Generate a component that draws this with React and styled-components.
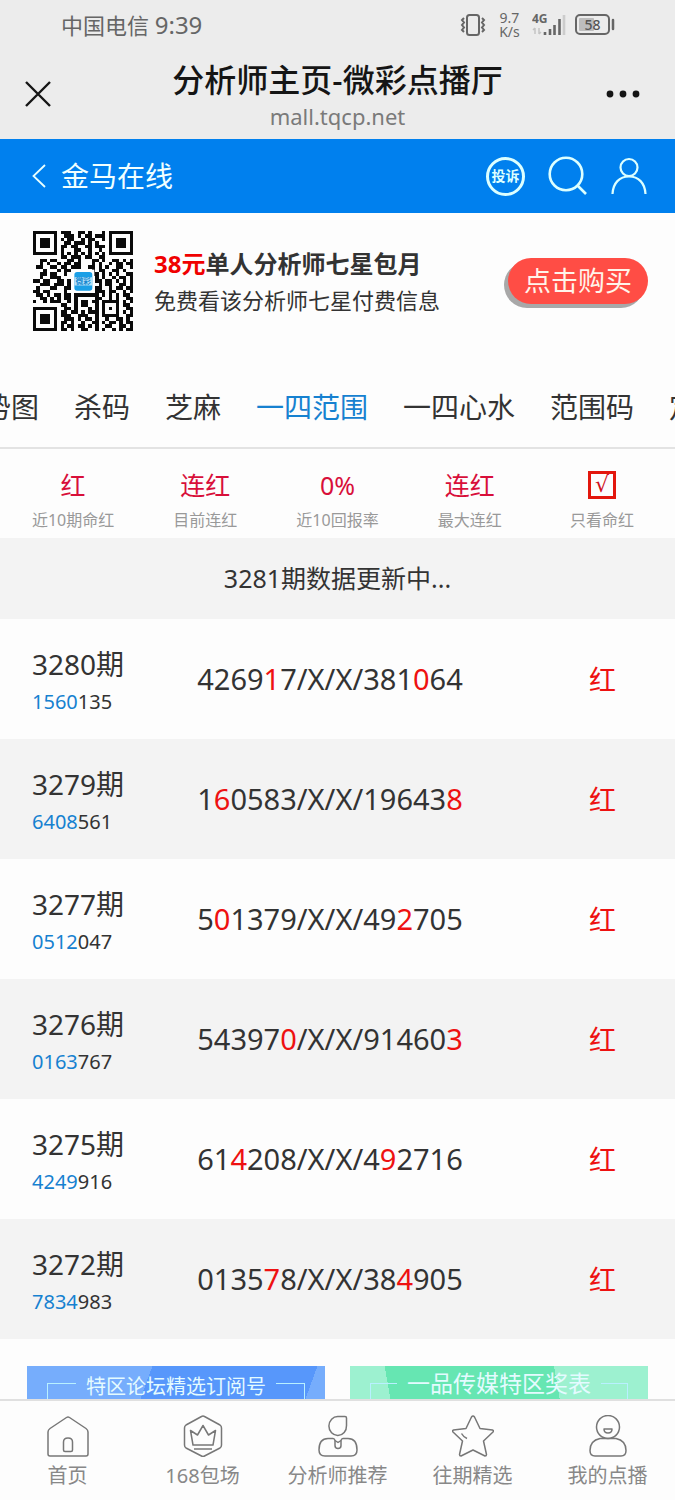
import React, { useLayoutEffect, useRef, useState } from 'react';
import styled, { createGlobalStyle } from 'styled-components';

// Period results, `hits` holds the positions of the highlighted digits
const RESULTS = [
    { period: '3280', head: '1560', tail: '135', code: '426917/X/X/381064', hits: [4, 14] },
    { period: '3279', head: '6408', tail: '561', code: '160583/X/X/196438', hits: [1, 16] },
    { period: '3277', head: '0512', tail: '047', code: '501379/X/X/492705', hits: [1, 13] },
    { period: '3276', head: '0163', tail: '767', code: '543970/X/X/914603', hits: [5, 16] },
    { period: '3275', head: '4249', tail: '916', code: '614208/X/X/492716', hits: [2, 12] },
    { period: '3272', head: '7834', tail: '983', code: '013578/X/X/384905', hits: [4, 13] },
];

const TABS = ['走势图', '杀码', '芝麻', '一四范围', '一四心水', '范围码', '定位'];

const STATS = [
    { value: '红', label: '近10期命红' },
    { value: '连红', label: '目前连红' },
    { value: '0%', label: '近10回报率' },
    { value: '连红', label: '最大连红' },
];

const QR_ROWS = [
    '#######.###..##.#...#.#######',
    '#.....#..###.#.##.###.#.....#',
    '#.###.#.#.##..#.##..#.#.###.#',
    '#.###.#..##.###.#.#...#.###.#',
    '#.###.#.##.##..##.###.#.###.#',
    '#.....#.#...##..#..#..#.....#',
    '#######.#.#.#.#.#.#.#.#######',
    '........##.###.##..##........',
    '..##.##...##.#...##.#..##.#.#',
    '..#.#..#.##.##...#.#..#.##.##',
    '.##..##.##.###..##.#.#..##..#',
    '...#...#.##......#.##..##.#..',
    '..##.##..#.......##.#.#.#..##',
    '..#..###........#.#.#..#.##.#',
    '##.##..##.#.......##.##.#.#.#',
    '..###.###.#........#.##..##.#',
    '.#...##..##.......##..#.##.##',
    '##.##....#........###.##..#.#',
    '.##.#.##.##.#######.#.#.#.##.',
    '..##.#.#.##.#.....##..#.#..##',
    '#..#.###..#.#.##.##.#####.#.#',
    '........##..#.##..#.#...#.##.',
    '#######..##.#...#.#.#.#.#..##',
    '#.....#.##.##.#.###.#...#.#.#',
    '#.###.#.###..###..#.#####..##',
    '#.###.#..###.#.##.#..#..##.#.',
    '#.###.#.##.#..#..##.#.##.#.##',
    '#.....#.#.##.##.#.#..##..##.#',
    '#######.##.#..##..#.#..#.#.##',
];

const VibrateIcon = () => (
    <svg width="28" height="24" viewBox="0 0 28 24" fill="none" stroke="#666" strokeWidth="2">
        <rect x="8" y="2" width="12" height="20" rx="2.5" />
        <path d="M5 5l-2 2 2 2.5-2 2.5 2 2.5-2 2.5 2 2M23 5l2 2-2 2.5 2 2.5-2 2.5 2 2.5-2 2" />
    </svg>
);

const SignalIcon = () => (
    <svg width="34" height="32" viewBox="0 0 34 32">
        <text x="0" y="14" fontSize="12" fontWeight="700" fill="#666">4G</text>
        <path d="M3 25v-6m-2 2l2-2M7 19v6m2-2l-2 2" stroke="#c4c4c4" strokeWidth="1.5" fill="none" />
        <path d="M13 26v-3M18 26v-6M22.5 26v-10M27.5 26v-16" stroke="#666" strokeWidth="2.6" />
        <path d="M32 26v-20" stroke="#ccc" strokeWidth="2.6" />
    </svg>
);

const BatteryIcon = () => (
    <svg width="40" height="22" viewBox="0 0 40 22">
        <rect x="1" y="1" width="33" height="19" rx="4" fill="none" stroke="#666" strokeWidth="2" />
        <rect x="4" y="4" width="15" height="13" rx="1" fill="#bdbdbd" />
        <path d="M38 6v9" stroke="#666" strokeWidth="2.5" strokeLinecap="round" />
        <text x="17.5" y="16" fontSize="14" fontWeight="500" fill="#555" textAnchor="middle">58</text>
    </svg>
);

const CloseIcon = () => (
    <svg width="26" height="26" viewBox="0 0 26 26" stroke="#151515" strokeWidth="2.4">
        <path d="M1 1l24 24M25 1L1 25" />
    </svg>
);

const MoreIcon = () => (
    <svg width="34" height="8" viewBox="0 0 34 8" fill="#151515">
        <circle cx="4" cy="4" r="3.4" />
        <circle cx="17" cy="4" r="3.4" />
        <circle cx="30" cy="4" r="3.4" />
    </svg>
);

const BackIcon = () => (
    <svg width="14" height="24" viewBox="0 0 14 24" fill="none" stroke="#e8ffff" strokeWidth="1.8">
        <path d="M13 1L1.5 12 13 23" />
    </svg>
);

const SearchIcon = () => (
    <svg width="40" height="40" viewBox="0 0 40 40" fill="none" stroke="#dcffff" strokeWidth="2.6">
        <circle cx="18" cy="18" r="16.3" />
        <path d="M29 29l9 9" />
    </svg>
);

const UserIcon = () => (
    <svg width="36" height="38" viewBox="0 0 36 38" fill="none" stroke="#dcffff" strokeWidth="2.2">
        <circle cx="18" cy="10.5" r="8.5" />
        <path d="M1.5 37C2 26 8.5 19.5 18 19.5S34 26 34.5 37" />
    </svg>
);

const QrCode = () => (
    <svg width="100" height="100" viewBox="0 0 29 29" role="img" aria-label="QR">
        <g shapeRendering="crispEdges" fill="#0a0a0a">
            {QR_ROWS.map((row, y) => [...row].map((cell, x) => (
                cell === '#' && <rect key={`${x}-${y}`} x={x} y={y} width="1" height="1" />
            )))}
        </g>
        <rect x="11.2" y="11.2" width="6.6" height="6.6" fill="#fff" />
        <rect x="12" y="11.9" width="5.2" height="5.4" rx="0.8" fill="#1b9fe6" />
        <rect x="12" y="13.4" width="5.2" height="2.4" fill="#b5e3fa" />
        <text x="14.6" y="15.4" fontSize="2.2" fontWeight="700" fill="#1787d0" textAnchor="middle">微彩</text>
    </svg>
);

const NAV_ITEMS = [
    {
        label: '首页',
        icon: (
            <>
                <path d="M3 13.5L19.5 2.5q1.5-1 3 0L39 13.5q2 1.5 2 3.5v22q0 2-2 2H3q-2 0-2-2V17q0-2 2-3.5z" />
                <path d="M16.5 35v-8q0-4 4.5-4t4.5 4v8q0 1.5-1.5 1.5h-6q-1.5 0-1.5-1.5z" />
            </>
        ),
    },
    {
        label: '168包场',
        icon: (
            <>
                <path d="M19.5 1.5q1.5-.8 3 0l15.5 8.5q1.5 1 1.5 3v17q0 2-1.5 3L22.5 41q-1.5.8-3 0L4 33q-1.5-1-1.5-3V13q0-2 1.5-3z" />
                <path d="M11 30L8.5 15.5l7 4.5L21 10.5l5.5 9.5 7-4.5L31 30zM12 34h18" />
            </>
        ),
    },
    {
        label: '分析师推荐',
        icon: (
            <>
                <path d="M21 1.5h7q1.500 0 1.500 1.500v7.500a8.800 9.500 0 1 1-8.500-9z" />
                <path d="M2 35c0-7 3-11.500 9-11.500h5q1.500 0 2 2v5q0 3 3 3t3-3v-5q.5-2 2-2h5c6 0 9 4.500 9 11.500 0 4-2 6-6 6H8c-4 0-6-2-6-6z" />
                <path d="M18 25.500l3 2 3-2" />
            </>
        ),
    },
    {
        label: '往期精选',
        icon: (
            <>
                <path d="M19.5 2q1.5-2 3 0L28 13.5l12.5 1.5q1.500.5.5 2l-9.5 9 3 13.5q0 1.5-1.5 1.5L21 35 9 41q-1.500 0-1.500-1.500l3-13.500L1 17q-1-1.500.5-2L14 13.500z" />
                <path d="M9.5 18.500q2 3.500 5.500 5" />
            </>
        ),
    },
    {
        label: '我的点播',
        icon: (
            <>
                <circle cx="21" cy="12" r="11.5" />
                <path d="M17 14h8q0 4-4 4t-4-4zM13 23.5h16q10 2 10 12 0 5.5-5 5.5H8q-5 0-5-5.5 0-10 10-12z" />
            </>
        ),
    },
];

// Top area drawn by the phone and the in-app browser
const BrowserHeader = () => (
    <BrowserBar>
        <StatusBar>
            <Carrier>中国电信 <Clock>9:39</Clock></Carrier>
            <StatusIcons>
                <VibrateIcon />
                <NetSpeed><span>9.7</span><span>K/s</span></NetSpeed>
                <SignalIcon />
                <BatteryIcon />
            </StatusIcons>
        </StatusBar>
        <TitleBar>
            <IconButton aria-label="关闭"><CloseIcon /></IconButton>
            <TitleBlock>
                <PageTitle>分析师主页-微彩点播厅</PageTitle>
                <PageHost>mall.tqcp.net</PageHost>
            </TitleBlock>
            <IconButton aria-label="更多"><MoreIcon /></IconButton>
        </TitleBar>
    </BrowserBar>
);

const TabStrip = () => {
    const stripRef = useRef(null);
    const [active, setActive] = useState('一四范围');

    useLayoutEffect(() => {
        stripRef.current.scrollLeft = 45;
    }, []);

    return (
        <Tabs ref={stripRef}>
            {TABS.map(tab => (
                <Tab key={tab} $active={tab === active} onClick={() => setActive(tab)}>{tab}</Tab>
            ))}
        </Tabs>
    );
};

const App = () => (
    <Screen>
        <GlobalStyle />
        <BrowserHeader />
        <AppBar>
            <BackLink href="#back"><BackIcon />金马在线</BackLink>
            <AppActions>
                <ComplaintButton>投诉</ComplaintButton>
                <IconButton aria-label="搜索"><SearchIcon /></IconButton>
                <IconButton aria-label="我的"><UserIcon /></IconButton>
            </AppActions>
        </AppBar>

        <Content>
            <Promo>
                <QrCode />
                <PromoText>
                    <PromoTitle><Price>38元</Price>单人分析师七星包月</PromoTitle>
                    <PromoNote>免费看该分析师七星付费信息</PromoNote>
                </PromoText>
                <BuyButton>点击购买</BuyButton>
            </Promo>

            <TabStrip />

            <Stats>
                {STATS.map(stat => (
                    <Stat key={stat.label}>
                        <StatValue>{stat.value}</StatValue>
                        <StatLabel>{stat.label}</StatLabel>
                    </Stat>
                ))}
                <Stat as="label">
                    <CheckHolder><HitCheckbox type="checkbox" defaultChecked /></CheckHolder>
                    <StatLabel>只看命红</StatLabel>
                </Stat>
            </Stats>

            <Notice>3281期数据更新中...</Notice>

            <ResultTable>
                <tbody>
                    {RESULTS.map(row => (
                        <ResultRow key={row.period}>
                            <PeriodCell>
                                <Period>{row.period}期</Period>
                                <Draw><DrawHead>{row.head}</DrawHead>{row.tail}</Draw>
                            </PeriodCell>
                            <CodeCell>
                                {[...row.code].map((char, i) => (
                                    row.hits.includes(i) ? <Hit key={i}>{char}</Hit> : char
                                ))}
                            </CodeCell>
                            <StateCell>红</StateCell>
                        </ResultRow>
                    ))}
                </tbody>
            </ResultTable>

            <Banners>
                <BlueBanner href="#forum">
                    <BannerFrame><BlueText>特区论坛精选订阅号</BlueText></BannerFrame>
                </BlueBanner>
                <GreenBanner href="#prizes">
                    <BannerFrame><GreenText>一品传媒特区奖表</GreenText></BannerFrame>
                </GreenBanner>
            </Banners>
        </Content>

        <BottomNav>
            {NAV_ITEMS.map(item => (
                <NavLink key={item.label} href="#nav">
                    <svg width="42" height="42" viewBox="0 0 42 42" fill="none" stroke="#777" strokeWidth="1.5" strokeLinejoin="round">
                        {item.icon}
                    </svg>
                    {item.label}
                </NavLink>
            ))}
        </BottomNav>
    </Screen>
);

export default App;

// Styled Components
const GlobalStyle = createGlobalStyle`
  * {
    box-sizing: border-box;
  }

  body {
    margin: 0;
    background-color: #fdfdfd;
    color: #333;
    font-family: "Noto Sans", "Noto Sans CJK SC", sans-serif;
  }

  button {
    padding: 0;
    border: none;
    background: none;
    color: inherit;
    font-family: inherit;
    cursor: pointer;
  }

  a {
    color: inherit;
    text-decoration: none;
  }

  svg {
    display: block;
    flex: none;
  }
`;

// Full height column, only the content part scrolls
const Screen = styled.div`
  display: flex;
  flex-direction: column;
  height: 100vh;
`;

const BrowserBar = styled.header`
  flex: none;
  background-color: #ececec;
`;

const StatusBar = styled.div`
  display: flex;
  justify-content: space-between;
  align-items: center;
  height: 50px;
  padding: 0 60px 0 61px;
  color: #666;
`;

const Carrier = styled.div`
  font-size: 22px;
  line-height: 28px;
`;

const Clock = styled.span`
  font-size: 24px;
`;

const StatusIcons = styled.div`
  display: flex;
  align-items: center;
  gap: 9px;
`;

const NetSpeed = styled.div`
  display: flex;
  flex-direction: column;
  align-items: center;
  width: 27px;
  font-size: 14px;
  line-height: 14px;
`;

const TitleBar = styled.div`
  display: grid;
  grid-template-columns: 1fr auto 1fr;
  align-items: center;
  height: 89px;
  padding: 0 35px 2px 25px;
`;

const TitleBlock = styled.div`
  padding-left: 10px;
  text-align: center;
`;

const PageTitle = styled.h1`
  margin: 0;
  color: #151515;
  font-size: 32px;
  font-weight: 500;
  line-height: 44px;
`;

const PageHost = styled.div`
  color: #7a7a7a;
  font-size: 22px;
  line-height: 28px;
`;

const IconButton = styled.button`
  display: block;

  ${TitleBlock} + & {
    justify-self: end;
  }

  &:first-child {
    justify-self: start;
  }
`;

const AppBar = styled.nav`
  display: flex;
  flex: none;
  justify-content: space-between;
  align-items: center;
  height: 74px;
  padding: 0 28px 0 32px;
  background-color: #0080ee;
`;

const BackLink = styled.a`
  display: flex;
  align-items: center;
  gap: 15px;
  color: #f0ffff;
  font-size: 28px;
  line-height: 36px;
`;

const AppActions = styled.div`
  display: flex;
  align-items: center;
  gap: 23px;
`;

const ComplaintButton = styled.button`
  width: 39px;
  height: 39px;
  border: 3px solid #dcffff;
  border-radius: 50%;
  color: #dcffff;
  font-size: 14px;
  font-weight: 700;
  line-height: 20px;
  white-space: nowrap;
`;

const Content = styled.main`
  flex: 1;
  min-height: 0;
  overflow-y: auto;
  scrollbar-width: none;
`;

const Promo = styled.section`
  display: flex;
  align-items: center;
  height: 136px;
  padding: 0 27px 0 33px;
`;

const PromoText = styled.div`
  flex: 1;
  padding: 2px 0 0 21px;
`;

const PromoTitle = styled.div`
  font-size: 24px;
  font-weight: 700;
  line-height: 36px;
`;

const Price = styled.span`
  color: #f00000;
`;

const PromoNote = styled.div`
  font-size: 22px;
  line-height: 36px;
`;

const BuyButton = styled.button`
  width: 140px;
  height: 46px;
  border-radius: 23px;
  background-color: #ff4d45;
  box-shadow: -4px 4px 0 #a8a8a8;
  color: #fff4ea;
  font-size: 27px;
  line-height: 36px;
`;

const Tabs = styled.div`
  display: flex;
  gap: 35px;
  height: 100px;
  padding-top: 18px;
  border-bottom: 2px solid #e3e3e3;
  overflow-x: auto;
  scrollbar-width: none;
`;

const Tab = styled.button`
  flex: none;
  color: ${props => (props.$active ? '#1681d0' : '#333')};
  font-size: 28px;
  line-height: 36px;
`;

const Stats = styled.section`
  display: flex;
  height: 89px;
  padding: 18px 7px 0;
`;

const Stat = styled.div`
  flex: 1;
  text-align: center;
`;

const StatValue = styled.div`
  color: #d80f3a;
  font-size: 25px;
  line-height: 36px;
`;

const StatLabel = styled.div`
  color: #999;
  font-size: 16px;
  line-height: 34px;
`;

const CheckHolder = styled.div`
  display: flex;
  justify-content: center;
  align-items: center;
  height: 36px;
`;

const HitCheckbox = styled.input`
  display: grid;
  place-items: center;
  width: 28px;
  height: 28px;
  margin: 0;
  border: 3px solid #e3170d;
  appearance: none;

  &:checked::after {
    content: '√';
    color: #d01020;
    font-family: "DejaVu Sans", sans-serif;
    font-size: 22px;
    line-height: 22px;
  }
`;

const Notice = styled.div`
  height: 81px;
  background-color: #f3f3f3;
  font-size: 25px;
  line-height: 80px;
  text-align: center;
`;

const ResultTable = styled.table`
  width: 100%;
  border-collapse: collapse;
  table-layout: fixed;
`;

const ResultRow = styled.tr`
  height: 120px;

  &:nth-child(even) {
    background-color: #f3f3f3;
  }
`;

const PeriodCell = styled.td`
  width: 130px;
  padding: 6px 0 0 32px;
`;

const Period = styled.div`
  font-size: 28px;
  line-height: 40px;
`;

const Draw = styled.div`
  font-size: 20px;
  line-height: 36px;
`;

const DrawHead = styled.span`
  color: #1681d0;
`;

const CodeCell = styled.td`
  padding: 0;
  font-size: 29px;
  line-height: 40px;
  text-align: center;
`;

const Hit = styled.span`
  color: #ee1111;
`;

const StateCell = styled.td`
  width: 145px;
  padding: 2px 0 0;
  color: #ee1111;
  font-size: 27px;
  line-height: 40px;
  text-align: center;
`;

const Banners = styled.section`
  display: grid;
  grid-template-columns: 1fr 1fr;
  gap: 25px;
  padding: 27px 27px 0;
`;

const Banner = styled.a`
  display: block;
  height: 88px;
  padding: 17px 20px;
  color: #e4fbff;
`;

const BlueBanner = styled(Banner)`
  background: linear-gradient(110deg, #76adfc 38%, #5797fb 38%, #5797fb 88%, #76adfc 88%);
`;

const GreenBanner = styled(Banner)`
  background: linear-gradient(80deg, #9df1d0 16%, #66e6b2 16%, #66e6b2 70%, #9df1d0 70%);
`;

// Thin frame with the caption sitting on its top edge
const BannerFrame = styled.span`
  display: flex;
  gap: 10px;
  height: 60px;

  &::before,
  &::after {
    content: '';
    flex: 1;
    border-top: 1px solid #b8f0ff;
  }

  &::before {
    border-left: 1px solid #b8f0ff;
  }

  &::after {
    border-right: 1px solid #b8f0ff;
  }
`;

const BlueText = styled.span`
  margin-top: -10px;
  font-size: 20px;
  line-height: 28px;
`;

const GreenText = styled.span`
  margin-top: -14px;
  font-size: 23px;
  line-height: 28px;
`;

const BottomNav = styled.nav`
  display: flex;
  flex: none;
  height: 101px;
  border-top: 2px solid #e0e0e0;
  background-color: #fdfdfd;
`;

const NavLink = styled.a`
  display: flex;
  flex: 1;
  flex-direction: column;
  align-items: center;
  gap: 4px;
  padding-top: 14px;
  color: #888;
  font-size: 20px;
  line-height: 30px;
  white-space: nowrap;
`;
